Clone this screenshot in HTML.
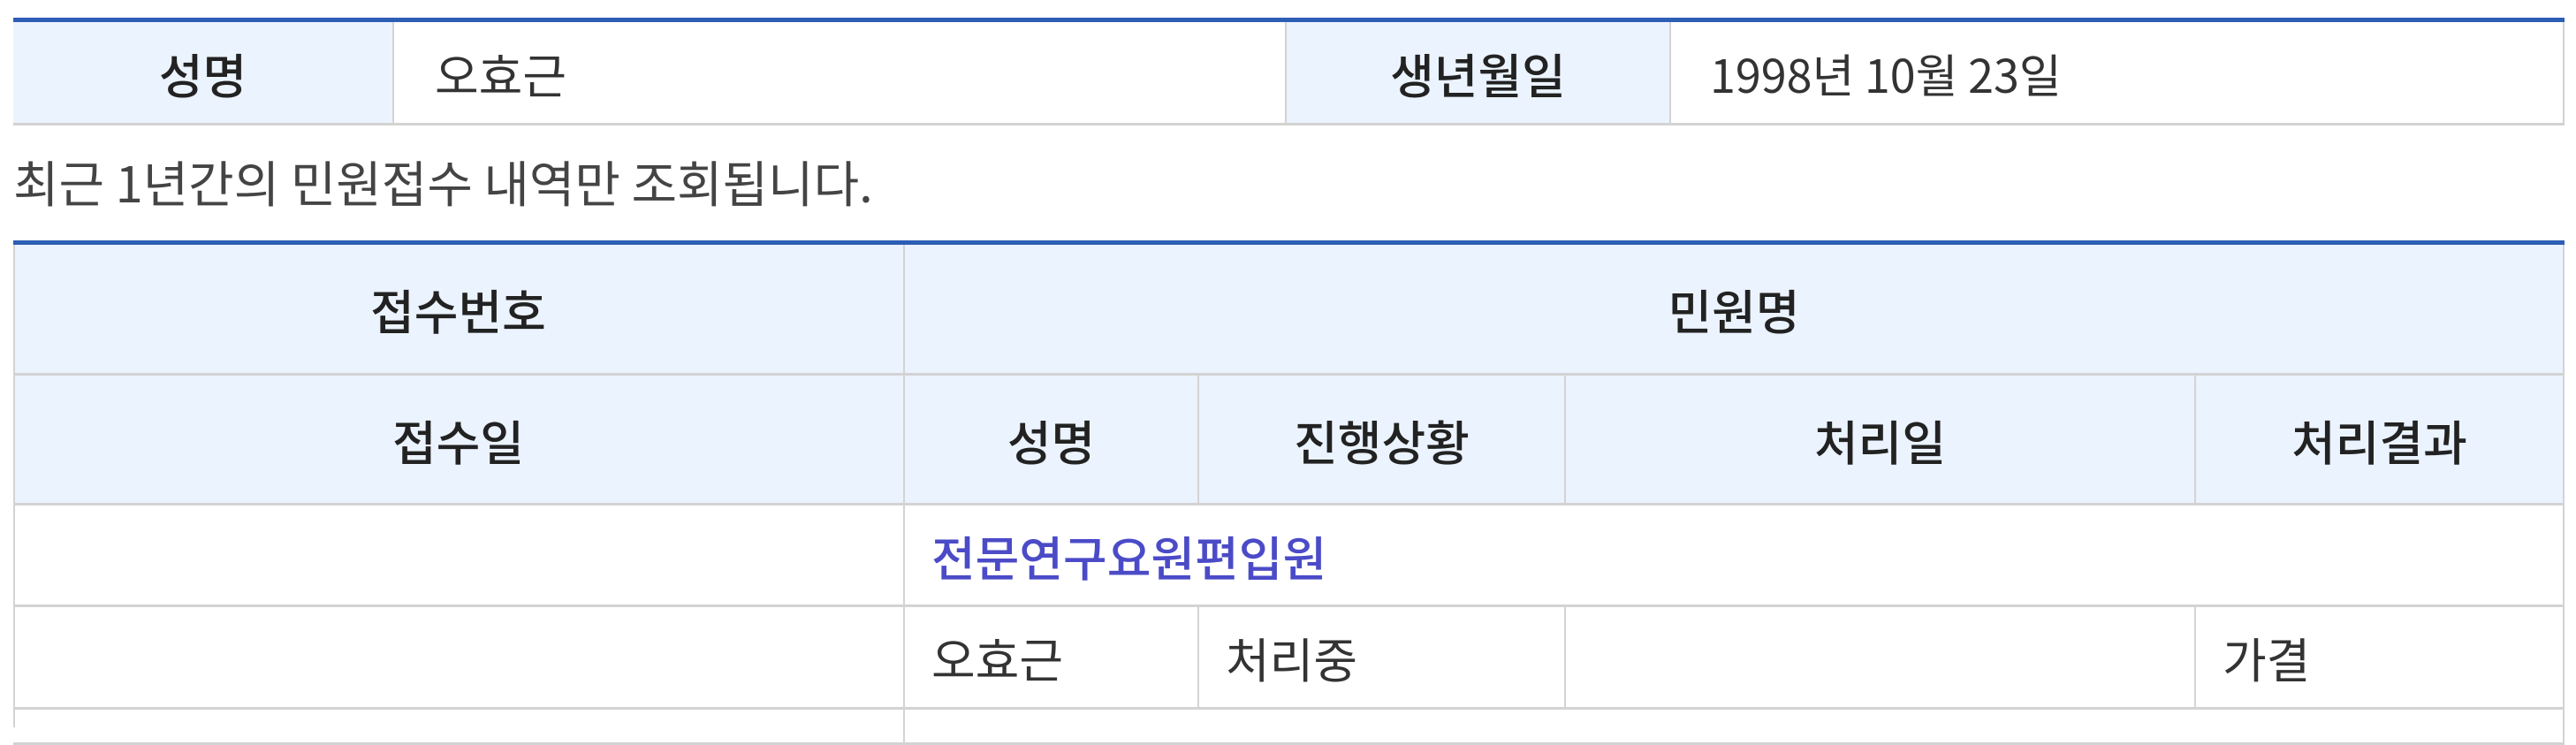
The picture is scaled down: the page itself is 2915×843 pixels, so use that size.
<!DOCTYPE html>
<html><head><meta charset="utf-8"><style>
body{margin:0;width:2915px;height:823px;background:#fff;position:relative;overflow:hidden;font-family:"Noto Sans CJK KR","Liberation Sans",sans-serif;color:#333}
.c{position:absolute;box-sizing:border-box;border-right:2px solid #d3d3d3;border-bottom:3px solid #d3d3d3;display:flex;align-items:center;font-size:54px;letter-spacing:0;white-space:nowrap}
.h{background:#ebf3fe;justify-content:center;font-weight:500;color:#222}
.l{padding-left:30px}
.bl{position:absolute;height:5px;background:#2d5eb5;left:15px;width:2887px}
</style></head><body>
<div class="bl" style="top:20px"></div>
<div style="position:absolute;left:15px;top:25px;width:2px;height:116px;background:#d3d3d3"></div>
<div class="c h" style="left:15px;top:25px;width:431px;height:117px">성명</div>
<div class="c" style="left:446px;top:25px;width:1010px;height:117px;padding-left:46px">오효근</div>
<div class="c h" style="left:1456px;top:25px;width:435px;height:117px">생년월일</div>
<div class="c" style="left:1891px;top:25px;width:1011px;height:117px;padding-left:44px;font-size:52px">1998년 10월 23일</div>
<div style="position:absolute;left:15px;top:165px;font-size:56px;color:#444;white-space:nowrap">최근 1년간의 민원접수 내역만 조회됩니다.</div>
<div class="bl" style="top:272px"></div>
<div style="position:absolute;left:15px;top:277px;width:2px;height:546px;background:#d3d3d3;z-index:2"></div>
<div class="c h" style="left:15px;top:277px;width:1009px;height:148px">접수번호</div>
<div class="c h" style="left:1024px;top:277px;width:1878px;height:148px">민원명</div>
<div class="c h" style="left:15px;top:425px;width:1009px;height:147px">접수일</div>
<div class="c h" style="left:1024px;top:425px;width:333px;height:147px">성명</div>
<div class="c h" style="left:1357px;top:425px;width:415px;height:147px">진행상황</div>
<div class="c h" style="left:1772px;top:425px;width:713px;height:147px">처리일</div>
<div class="c h" style="left:2485px;top:425px;width:417px;height:147px">처리결과</div>
<div class="c" style="left:15px;top:572px;width:1009px;height:115px"></div>
<div class="c l" style="left:1024px;top:572px;width:1878px;height:115px;color:#4b4bc8;font-weight:500">전문연구요원편입원</div>
<div class="c" style="left:15px;top:687px;width:1009px;height:116px"></div>
<div class="c l" style="left:1024px;top:687px;width:333px;height:116px">오효근</div>
<div class="c l" style="left:1357px;top:687px;width:415px;height:116px">처리중</div>
<div class="c l" style="left:1772px;top:687px;width:713px;height:116px"></div>
<div class="c l" style="left:2485px;top:687px;width:417px;height:116px">가결</div>
<div class="c" style="left:15px;top:803px;width:1009px;height:40px"></div>
<div class="c" style="left:1024px;top:803px;width:1878px;height:40px"></div>
</body></html>
